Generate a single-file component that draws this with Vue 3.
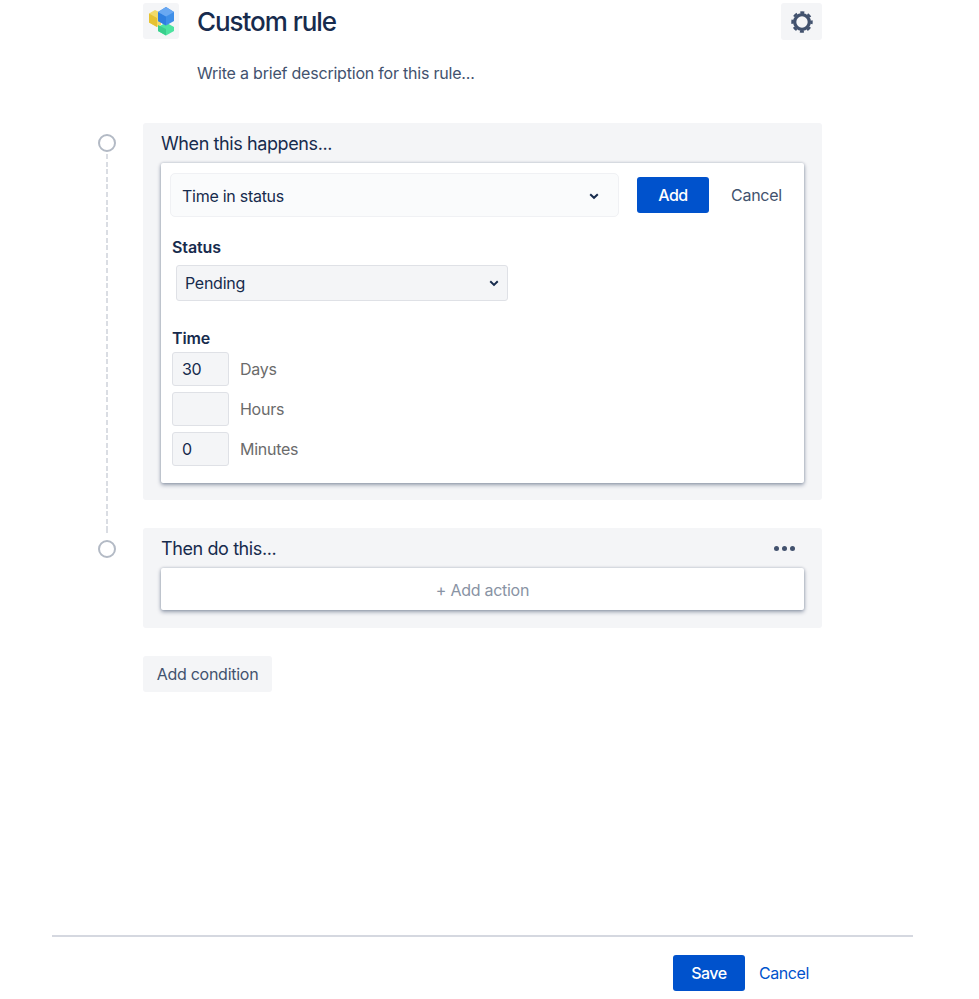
<script setup>
const timeFields = [
  { value: '30', unit: 'Days' },
  { value: '', unit: 'Hours' },
  { value: '0', unit: 'Minutes' },
]
</script>

<template>
  <div class="page">
    <header class="head">
      <div class="logo">
        <svg width="36" height="36" viewBox="0 0 36 36">
          <polygon points="6,10.5 12,7 18,10 18,22 14,24 6,19.5" fill="#f1da6a" />
          <polygon points="6,10.5 14,15 14,24 6,19.5" fill="#e6c232" />
          <polygon points="15,24 23,19.5 31,24 31,28 23,32.5 15,28" fill="#4de3a0" />
          <polygon points="15,22 23,26 23,32.5 15,28" fill="#38cf8c" />
          <polygon points="15,9 23,4 31,9 31,18 23,22.5 15,18" fill="#3f8fe8" />
          <polygon points="15,9 23,13.5 23,22.5 15,18" fill="#2f7fe0" />
          <polygon points="15,9 23,4 31,9 23,13.5" fill="#69a8f2" />
        </svg>
      </div>
      <div class="titles">
        <h1 class="title">Custom rule</h1>
        <p class="desc">Write a brief description for this rule...</p>
      </div>
      <button class="gear" aria-label="Settings">
        <svg width="22" height="22" viewBox="0 0 24 24" fill="none" stroke="#42526e">
          <circle cx="12" cy="12" r="8" stroke-width="3.6" />
          <circle cx="12" cy="12" r="10.4" stroke-width="2.6" stroke-dasharray="4.4 3.77" stroke-dashoffset="2.2" />
        </svg>
      </button>
    </header>

    <section class="flow">
      <div class="step">
        <div class="gutter">
          <span class="dot"></span>
          <span class="dash"></span>
        </div>
        <div class="panel-wrap">
          <div class="panel trigger-panel">
            <div class="panel-title">When this happens...</div>
            <div class="card editor">
              <div class="top-row">
                <div class="trigger">
                  <span>Time in status</span>
                  <svg width="12" height="12" viewBox="0 0 12 12" fill="none" stroke="#172b4d" stroke-width="2"><path d="M2.2 4.2 6 7.8l3.8-3.6" /></svg>
                </div>
                <button class="btn primary">Add</button>
                <button class="link-cancel">Cancel</button>
              </div>
              <div class="label status-label">Status</div>
              <div class="select">
                <span>Pending</span>
                <svg width="10" height="10" viewBox="0 0 12 12" fill="none" stroke="#172b4d" stroke-width="2.4"><path d="M1.5 4 6 8.3 10.5 4" /></svg>
              </div>
              <div class="label time-label">Time</div>
              <div class="time-list">
                <div v-for="f in timeFields" :key="f.unit" class="time-row">
                  <div class="num">{{ f.value }}</div>
                  <span class="unit">{{ f.unit }}</span>
                </div>
              </div>
            </div>
          </div>
        </div>
      </div>

      <div class="step">
        <div class="gutter second">
          <span class="dash short"></span>
          <span class="dot"></span>
        </div>
        <div class="panel-wrap last">
          <div class="panel">
            <div class="panel-title with-more">
              <span>Then do this...</span>
              <span class="more"><i></i><i></i><i></i></span>
            </div>
            <div class="card add-action">+ Add action</div>
          </div>
        </div>
      </div>
    </section>

    <button class="add-condition">Add condition</button>

    <footer class="foot">
      <button class="btn primary save">Save</button>
      <button class="foot-cancel">Cancel</button>
    </footer>
  </div>
</template>

<style scoped>
.page {
  width: 979px;
  height: 999px;
  box-sizing: border-box;
  display: flex;
  flex-direction: column;
  font-family: Inter, "Liberation Sans", sans-serif;
  color: #172b4d;
  background: #fff;
  overflow: hidden;
  letter-spacing: -0.27px;
}
button {
  font-family: inherit;
  letter-spacing: inherit;
  border: 0;
  padding: 0;
  margin: 0;
  cursor: pointer;
}
.head {
  display: flex;
  align-items: flex-start;
  margin: 3px 157px 0 143px;
  height: 120px;
}
.logo {
  width: 36px;
  height: 36px;
  flex: none;
  border-radius: 3px;
  background: #f4f5f7;
}
.logo svg {
  display: block;
}
.titles {
  margin-left: 18px;
  flex: 1;
}
.title {
  margin: 0;
  font-size: 26px;
  line-height: 38px;
  font-weight: 500;
  letter-spacing: -1.05px;
}
.desc {
  margin: 20px 0 0;
  font-size: 16px;
  line-height: 24px;
  color: #42526e;
  letter-spacing: -0.21px;
}
.gear {
  width: 41px;
  height: 37px;
  background: #f4f5f7;
  border-radius: 3px;
  display: flex;
  align-items: center;
  justify-content: center;
}
.step {
  display: flex;
  margin-left: 98px;
  width: 724px;
}
.gutter {
  width: 45px;
  flex: none;
  display: flex;
  flex-direction: column;
  padding-top: 11px;
  box-sizing: border-box;
}
.gutter.second {
  padding-top: 0;
}
.dot {
  width: 18px;
  height: 18px;
  box-sizing: border-box;
  border: 2px solid #b3bac5;
  border-radius: 50%;
  flex: none;
}
.dash {
  display: block;
  flex: 1;
  width: 2px;
  margin-left: 8px;
  margin-top: 2px;
  background: repeating-linear-gradient(to bottom, #dadde3 0 5px, transparent 5px 7.6px);
}
.dash.short {
  flex: none;
  height: 7px;
  margin-top: 0;
  margin-bottom: 5px;
}
.panel-wrap {
  flex: 1;
  min-width: 0;
  padding-bottom: 28px;
}
.panel-wrap.last {
  padding-bottom: 0;
}
.panel {
  background: #f4f5f7;
  border-radius: 3px;
  padding: 0 18px 18px;
}
.trigger-panel {
  padding-bottom: 17px;
}
.panel-title {
  font-size: 18px;
  line-height: 41px;
  height: 40px;
  letter-spacing: -0.4px;
}
.with-more {
  display: flex;
  align-items: center;
  justify-content: space-between;
}
.more {
  display: flex;
  gap: 3px;
  margin-right: 9px;
}
.more i {
  width: 5px;
  height: 5px;
  border-radius: 50%;
  background: #42526e;
}
.card {
  background: #fff;
  border-radius: 2px;
  box-shadow: 0 2px 4px rgba(9, 30, 66, 0.38), 0 0 3px rgba(9, 30, 66, 0.22);
}
.editor {
  padding: 10px 10px 0 9px;
  height: 320px;
  box-sizing: border-box;
}
.top-row {
  display: flex;
  align-items: center;
}
.trigger {
  width: 449px;
  height: 44px;
  box-sizing: border-box;
  padding: 2px 18px 0 11px;
  border: 1px solid #f0f1f4;
  border-radius: 5px;
  background: #fafbfc;
  display: flex;
  align-items: center;
  justify-content: space-between;
  font-size: 16px;
}
.btn {
  height: 36px;
  border-radius: 3px;
  font-size: 16px;
  font-weight: 500;
  text-align: center;
  letter-spacing: -0.5px;
}
.primary {
  background: #0052cc;
  color: #fff;
  width: 72px;
}
.top-row .primary {
  margin-left: 18px;
}
.link-cancel {
  background: none;
  color: #42526e;
  font-size: 16px;
  margin-left: 22px;
}
.label {
  font-size: 16px;
  font-weight: 600;
  line-height: 20px;
  margin-left: 2px;
  letter-spacing: -0.1px;
}
.status-label {
  margin-top: 20px;
}
.select {
  margin: 8px 0 0 6px;
  width: 332px;
  height: 36px;
  box-sizing: border-box;
  background: #f4f5f7;
  border: 1px solid #dfe1e6;
  border-radius: 3px;
  padding: 0 8px;
  display: flex;
  align-items: center;
  justify-content: space-between;
  font-size: 16px;
}
.time-label {
  margin-top: 27px;
}
.time-list {
  margin: 4px 0 0 2px;
  display: flex;
  flex-direction: column;
  gap: 6px;
}
.time-row {
  display: flex;
  align-items: center;
}
.num {
  width: 57px;
  height: 34px;
  box-sizing: border-box;
  background: #f4f5f7;
  border: 1px solid #dfe1e6;
  border-radius: 3px;
  padding-left: 9px;
  font-size: 16px;
  line-height: 32px;
}
.unit {
  margin-left: 11px;
  font-size: 16px;
  color: #6b6b6b;
}
.add-action {
  height: 42px;
  line-height: 44px;
  text-align: center;
  font-size: 16px;
  color: #8993a4;
}
.add-condition {
  align-self: flex-start;
  margin: 28px 0 0 143px;
  width: 129px;
  height: 36px;
  background: #f4f5f7;
  border-radius: 3px;
  color: #42526e;
  font-size: 16px;
}
.foot {
  margin: auto 66px 8px 52px;
  border-top: 2px solid #d5d8e0;
  padding: 18px 104px 0 0;
  display: flex;
  justify-content: flex-end;
  align-items: center;
}
.foot-cancel {
  background: none;
  color: #0052cc;
  font-size: 16px;
  margin-left: 14px;
  letter-spacing: -0.4px;
}
</style>
